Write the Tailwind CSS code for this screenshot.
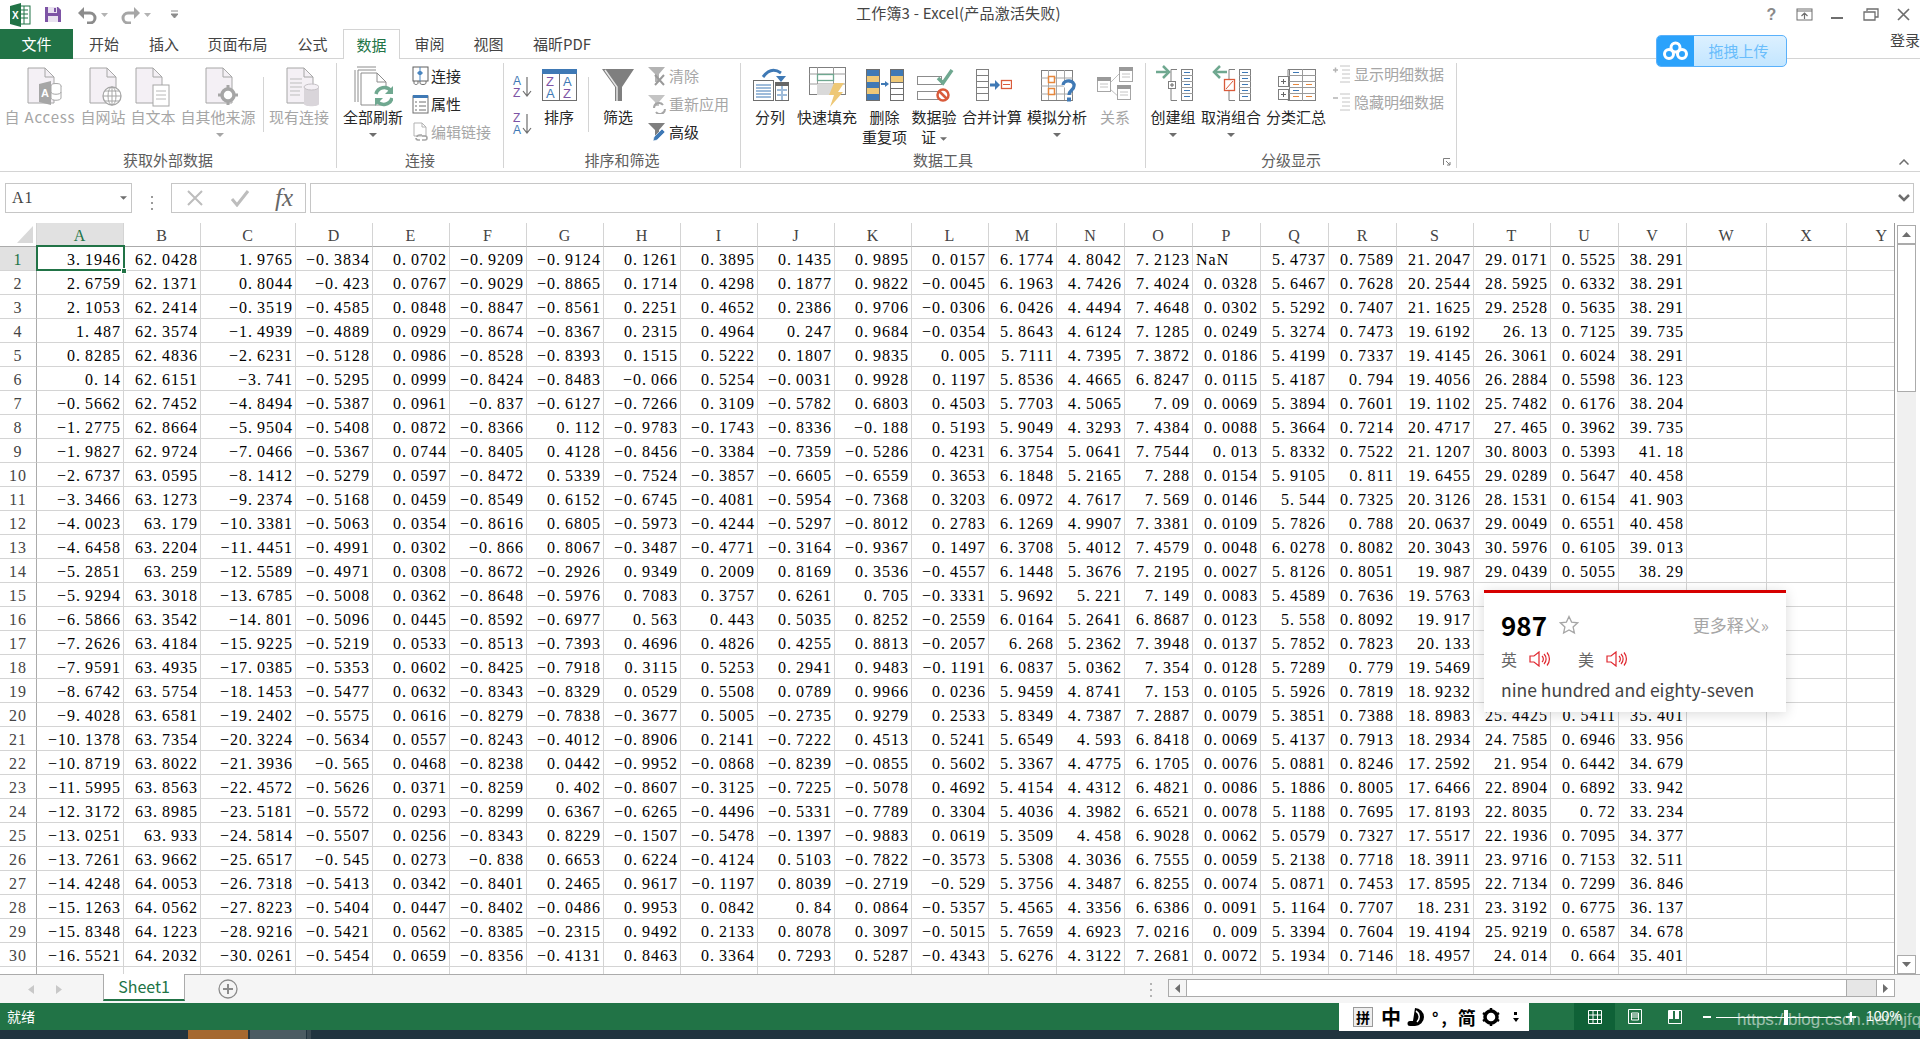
<!DOCTYPE html>
<html lang="zh-CN">
<head>
<meta charset="utf-8">
<script src="https://cdn.jsdelivr.net/npm/@tailwindcss/browser@4"></script>
<title>工作簿3 - Excel</title>
</head>
<body class="m-0">
<div class="relative w-[1920px] h-[1039px] overflow-hidden bg-white flex flex-col font-['Noto_Sans_CJK_SC',sans-serif] text-[15px] text-[#444]">

<!-- title bar -->
<div class="h-[29px] shrink-0 grid grid-cols-[856px_1fr_165px] items-center">
  <div class="flex items-center pl-[10px]">
    <svg class="w-[21px] h-[24px]" viewBox="0 0 21 24"><rect x="8" y="3" width="12" height="18" fill="#fff" stroke="#217346"/><path d="M11 7h7M11 11h7M11 15h7M14 3v18" stroke="#217346"/><path d="M0 3l11-3v24L0 21z" fill="#217346"/><text x="2" y="16" font-size="10" font-weight="700" fill="#fff" font-family="Liberation Sans">X</text></svg>
    <svg class="w-[18px] h-[17px] ml-[13px]" viewBox="0 0 18 17"><path d="M1 1h13l3 3v12H1z" fill="#7d54a5"/><rect x="4" y="1" width="9" height="6" fill="#e9e2f0"/><rect x="4" y="10" width="10" height="6" fill="#e9e2f0"/><rect x="10" y="2" width="2" height="4" fill="#7d54a5"/></svg>
    <svg class="w-[20px] h-[18px] ml-[15px]" viewBox="0 0 20 18"><path d="M4 7h9a5 5 0 0 1 0 10h-3" fill="none" stroke="#8c8c8c" stroke-width="3"/><path d="M7 1L1 7l6 6z" fill="#8c8c8c"/></svg>
    <svg class="w-[7px] h-[4px] ml-[4px]" viewBox="0 0 7 4"><path d="M0 0h7L3.500 4z" fill="#b3b3b3"/></svg>
    <svg class="w-[20px] h-[18px] ml-[13px]" viewBox="0 0 20 18"><path d="M16 7H7a5 5 0 0 0 0 10h3" fill="none" stroke="#a6a6a6" stroke-width="3"/><path d="M13 1l6 6-6 6z" fill="#a6a6a6"/></svg>
    <svg class="w-[7px] h-[4px] ml-[3px]" viewBox="0 0 7 4"><path d="M0 0h7L3.500 4z" fill="#b3b3b3"/></svg>
    <svg class="w-[7px] h-[9px] ml-[20px]" viewBox="0 0 7 9"><path d="M0 1h7M0 4h7L3.500 8z" stroke="#8c8c8c" fill="#8c8c8c" stroke-width="1"/></svg>
  </div>
  <div class="leading-[26px] h-[29px] text-[#444] tracking-[0.2px]">工作簿3 - Excel(产品激活失败)</div>
  <div class="flex items-center justify-end h-[29px]">
    <span class="w-[33px] text-center font-bold text-[#8a8a8a] font-['Liberation_Sans'] text-[16px]">?</span>
    <svg class="w-[33px] h-[13px]" viewBox="0 0 33 13"><rect x="9" y="1" width="15" height="11" fill="none" stroke="#6e6e6e"/><path d="M9 3h15M16.500 11V5M13.500 8l3-3 3 3" fill="none" stroke="#6e6e6e" stroke-width="1.200"/></svg>
    <svg class="w-[33px] h-[13px]" viewBox="0 0 33 13"><path d="M10 10h12" stroke="#6e6e6e" stroke-width="2"/></svg>
    <svg class="w-[33px] h-[13px]" viewBox="0 0 33 13"><path d="M13 3V1h11v8h-3M10 4h11v8H10z" fill="none" stroke="#6e6e6e" stroke-width="1.300"/></svg>
    <svg class="w-[33px] h-[13px]" viewBox="0 0 33 13"><path d="M11 1l11 11M22 1L11 12" stroke="#6e6e6e" stroke-width="1.700"/></svg>
  </div>
</div>

<!-- tabs -->
<div class="h-[30px] shrink-0 flex border-b border-[#d4d4d4] leading-[29px] text-center text-[#444]">
  <div class="w-[73px] h-[30px] bg-[#217346] text-white">文件</div>
  <div class="w-[62px]">开始</div>
  <div class="w-[58px]">插入</div>
  <div class="w-[89px]">页面布局</div>
  <div class="w-[61px]">公式</div>
  <div class="w-[57px] h-[30px] bg-white border-x border-t border-[#d4d4d4] text-[#217346]">数据</div>
  <div class="w-[59px]">审阅</div>
  <div class="w-[59px]">视图</div>
  <div class="w-[88px]">福昕PDF</div>
  <div class="ml-auto w-[30px] text-left text-[#444] whitespace-nowrap -translate-y-[4px]">登录</div>
</div>

<!-- ribbon -->
<div class="h-[113px] shrink-0 pt-[4px] flex border-b border-[#d4d4d4]">
  <!-- group 1 -->
  <div class="w-[337px] h-[105px] border-r border-[#d4d4d4] flex flex-col">
    <div class="h-[89px] flex pl-[5px] text-[#a6a6a6] leading-[20px] text-center">
      <div class="w-[70px] flex flex-col items-center">
        <svg class="w-[40px] h-[44px] translate-x-[4px]" viewBox="0 0 40 44"><path d="M4 5h17l9 9v26H4z" fill="#f4f0f5" stroke="#a6a6a6"/><path d="M21 5v9h9" fill="none" stroke="#a6a6a6"/><path d="M15 21l12-3v24l-12-3z" fill="#a6a6a6"/><text x="17" y="34" font-size="11" font-weight="700" fill="#fff" font-family="Liberation Sans">A</text><ellipse cx="32" cy="23" rx="5" ry="2.500" fill="#fff" stroke="#a6a6a6"/><path d="M27 23v12c0 3 10 3 10 0V23M27 29c0 3 10 3 10 0" fill="#fff" stroke="#a6a6a6"/></svg>
        <span class="whitespace-nowrap tracking-[0.8px]">自 Access</span>
      </div>
      <div class="w-[56px] flex flex-col items-center">
        <svg class="w-[40px] h-[44px]" viewBox="0 0 40 44"><path d="M7 5h17l9 9v26H7z" fill="#f4f0f5" stroke="#a6a6a6"/><path d="M24 5v9h9" fill="none" stroke="#a6a6a6"/><circle cx="29" cy="33" r="9" fill="#fff" stroke="#a6a6a6" stroke-width="1.300"/><path d="M20 33h18M29 24v18M22 28h14M22 38h14" stroke="#a6a6a6"/><ellipse cx="29" cy="33" rx="4" ry="9" fill="none" stroke="#a6a6a6"/></svg>
        <span class="whitespace-nowrap">自网站</span>
      </div>
      <div class="w-[44px] flex flex-col items-center">
        <svg class="w-[40px] h-[44px]" viewBox="0 0 40 44"><path d="M3 5h17l9 9v26H3z" fill="#f4f0f5" stroke="#a6a6a6"/><path d="M20 5v9h9" fill="none" stroke="#a6a6a6"/><rect x="20" y="22" width="16" height="21" fill="#fff" stroke="#a6a6a6"/><path d="M23 28h10M23 32h10M23 36h10" stroke="#b8b8b8"/></svg>
        <span class="whitespace-nowrap">自文本</span>
      </div>
      <div class="w-[86px] flex flex-col items-center">
        <svg class="w-[40px] h-[44px]" viewBox="0 0 40 44"><path d="M8 5h17l9 9v26H8z" fill="#f4f0f5" stroke="#a6a6a6"/><path d="M25 5v9h9" fill="none" stroke="#a6a6a6"/><circle cx="30" cy="32" r="6" fill="#fff" stroke="#a6a6a6" stroke-width="3.500"/><path d="M30 22v4M30 38v4M20 32h4M36 32h4" stroke="#a6a6a6" stroke-width="3"/></svg>
        <span class="whitespace-nowrap">自其他来源</span>
        <svg class="w-[8px] h-[4px] mt-[6px] translate-x-[2px]" viewBox="0 0 8 4"><path d="M0 0h8L4 4z" fill="#a6a6a6"/></svg>
      </div>
      <div class="w-px h-[55px] mt-[14px] ml-[2px] bg-[#d4d4d4]"></div>
      <div class="w-[68px] ml-[1px] flex flex-col items-center">
        <svg class="w-[40px] h-[44px]" viewBox="0 0 40 44"><path d="M8 5h17l9 9v26H8z" fill="#f4f0f5" stroke="#a6a6a6"/><path d="M25 5v9h9" fill="none" stroke="#a6a6a6"/><path d="M11 16h12M11 20h12M11 24h12M11 28h10M11 32h10" stroke="#bdbdbd"/><path d="M25 24v17c0 3 15 3 15 0V24z" fill="#d9d5da"/><ellipse cx="32.500" cy="24" rx="7.500" ry="3" fill="#f4f0f5" stroke="#c4c0c5"/></svg>
        <span class="whitespace-nowrap">现有连接</span>
      </div>
    </div>
    <div class="h-[16px] leading-[16px] text-center text-[#5e5e5e]">获取外部数据</div>
  </div>
  <!-- group 2 -->
  <div class="w-[167px] h-[105px] border-r border-[#d4d4d4] flex flex-col">
    <div class="h-[89px] flex pl-[2px] leading-[20px] text-center text-[#262626]">
      <div class="w-[68px] flex flex-col items-center">
        <svg class="w-[40px] h-[44px]" viewBox="0 0 40 44"><path d="M4 4h19M2 7v32M5 7h18M3 7" fill="none" stroke="#8c8c8c"/><path d="M5 7v32M8 10h16l9 9v23H8z" fill="#fff" stroke="#8c8c8c"/><path d="M24 10v9h9" fill="none" stroke="#8c8c8c"/><circle cx="31" cy="33" r="10" fill="#fff"/><path d="M23 31a8.500 8.500 0 0 1 15-3M39 35a8.500 8.500 0 0 1-15 3" fill="none" stroke="#6fa890" stroke-width="3.500"/><path d="M40 23v8h-8zM22 43v-8h8z" fill="#6fa890"/></svg>
        <span class="whitespace-nowrap">全部刷新</span>
        <svg class="w-[8px] h-[4px] mt-[6px]" viewBox="0 0 8 4"><path d="M0 0h8L4 4z" fill="#6e6e6e"/></svg>
      </div>
      <div class="ml-[5px] -mt-px flex flex-col text-left">
        <div class="h-[28px] flex items-center gap-[1px]"><svg class="w-[18px] h-[20px]" viewBox="0 0 18 20"><rect x="1" y="1" width="15" height="14" fill="#fff" stroke="#5f5f5f"/><path d="M8 4l3 3-3 3-3-3z" fill="#4a86c0"/><path d="M8 1v3M8 10v5" stroke="#4a86c0"/><path d="M2 15v2c0 2 4 2 4 0v-2M8 15v2c0 2 6 2 6 0v-2" fill="none" stroke="#6e6e6e"/></svg><span>连接</span></div>
        <div class="h-[28px] flex items-center gap-[1px]"><svg class="w-[18px] h-[20px]" viewBox="0 0 18 20"><rect x="1" y="2" width="15" height="17" fill="#fff" stroke="#6e6e6e"/><rect x="1" y="1" width="15" height="3" fill="#3f79b5"/><path d="M7 8h7M7 12h7M7 16h7M3 8h2M3 12h2M3 16h2" stroke="#6e6e6e"/></svg><span>属性</span></div>
        <div class="h-[28px] flex items-center gap-[1px] text-[#a6a6a6]"><svg class="w-[18px] h-[20px]" viewBox="0 0 18 20"><path d="M2 1h8l4 4v9H2z" fill="#fff" stroke="#b3b3b3"/><path d="M10 1v4h4" fill="none" stroke="#b3b3b3"/><path d="M5 15a3 2 0 0 1 3-2h2M8 18H6a3 2 0 0 1-2-2M10 14h3a2 2 0 0 1 0 4h-3" fill="none" stroke="#a6a6a6" stroke-width="1.600"/></svg><span class="whitespace-nowrap">编辑链接</span></div>
      </div>
    </div>
    <div class="h-[16px] leading-[16px] text-center text-[#5e5e5e]">连接</div>
  </div>
  <!-- group 3 -->
  <div class="w-[237px] h-[105px] border-r border-[#d4d4d4] flex flex-col">
    <div class="h-[89px] flex pl-[4px] leading-[20px] text-center text-[#262626]">
      <div class="w-[27px] flex flex-col items-center pt-[11px] gap-[13px]">
        <svg class="w-[20px] h-[24px]" viewBox="0 0 20 24"><text x="1" y="11" font-size="12" fill="#3f79b5" font-family="Liberation Sans">A</text><text x="1" y="23" font-size="12" fill="#7d54a5" font-family="Liberation Sans">Z</text><path d="M15 3v18M11 17l4 5 4-5" fill="none" stroke="#6e6e6e" stroke-width="1.200"/></svg>
        <svg class="w-[20px] h-[24px]" viewBox="0 0 20 24"><text x="1" y="11" font-size="12" fill="#7d54a5" font-family="Liberation Sans">Z</text><text x="1" y="23" font-size="12" fill="#3f79b5" font-family="Liberation Sans">A</text><path d="M15 3v18M11 17l4 5 4-5" fill="none" stroke="#6e6e6e" stroke-width="1.200"/></svg>
      </div>
      <div class="w-[48px] flex flex-col items-center">
        <svg class="w-[40px] h-[44px]" viewBox="0 0 40 44"><rect x="3.500" y="6.500" width="34" height="31" fill="#fff" stroke="#6e6e6e"/><rect x="3" y="6" width="35" height="5" fill="#3f79b5"/><path d="M20.500 11v26" stroke="#6e6e6e"/><text x="7" y="23" font-size="13" fill="#7d54a5" font-family="Liberation Sans">Z</text><text x="7" y="35" font-size="13" fill="#3f79b5" font-family="Liberation Sans">A</text><text x="24" y="23" font-size="13" fill="#3f79b5" font-family="Liberation Sans">A</text><text x="24" y="35" font-size="13" fill="#7d54a5" font-family="Liberation Sans">Z</text></svg>
        <span>排序</span>
      </div>
      <div class="w-px h-[55px] mt-[14px] ml-[5px] bg-[#d4d4d4]"></div>
      <div class="w-[52px] ml-[3px] flex flex-col items-center">
        <svg class="w-[40px] h-[44px]" viewBox="0 0 40 44"><path d="M4 6h32L24 24v14h-7V24z" fill="#7f7f7f"/><path d="M7 7l12 17v14" fill="none" stroke="#e6e6e6" stroke-width="1.500"/></svg>
        <span>筛选</span>
      </div>
      <div class="ml-[4px] -mt-px flex flex-col text-left">
        <div class="h-[28px] flex items-center gap-[3px] text-[#a6a6a6]"><svg class="w-[18px] h-[20px]" viewBox="0 0 18 20"><path d="M0 1h17l-6 7v8H7V8z" fill="#b3b3b3"/><path d="M7 9l9 10M16 9l-9 10" stroke="#9a9a9a" stroke-width="2"/></svg><span>清除</span></div>
        <div class="h-[28px] flex items-center gap-[3px] text-[#a6a6a6]"><svg class="w-[18px] h-[20px]" viewBox="0 0 18 20"><path d="M0 1h17l-6 7v4H7V8z" fill="#c4c4c4"/><path d="M6 14a5 5 0 0 1 9-3M17 15a5 5 0 0 1-9 3" fill="none" stroke="#a6a6a6" stroke-width="2"/></svg><span class="whitespace-nowrap">重新应用</span></div>
        <div class="h-[28px] flex items-center gap-[3px]"><svg class="w-[18px] h-[20px]" viewBox="0 0 18 20"><path d="M0 1h17l-6 7v6H7V8z" fill="#7f7f7f"/><path d="M5 19l1-4 8-8 3 3-8 8z" fill="#3f79b5" stroke="#fff" stroke-width=".6"/></svg><span>高级</span></div>
      </div>
    </div>
    <div class="h-[16px] leading-[16px] text-center text-[#5e5e5e] whitespace-nowrap">排序和筛选</div>
  </div>
  <!-- group 4 -->
  <div class="w-[405px] h-[105px] border-r border-[#d4d4d4] flex flex-col">
    <div class="h-[89px] flex pl-[4px] leading-[20px] text-center text-[#262626]">
      <div class="w-[50px] flex flex-col items-center">
        <svg class="w-[40px] h-[44px]" viewBox="0 0 40 44"><rect x="3.500" y="17.500" width="20" height="20" fill="#fff" stroke="#6e6e6e"/><path d="M6 22h15M6 25h15M6 28h15M6 31h15M6 34h15" stroke="#3f79b5"/><rect x="25.500" y="21.500" width="13" height="16" fill="#fff" stroke="#6e6e6e"/><rect x="25" y="19" width="14" height="4" fill="#666"/><path d="M27 27h4M33 27h4M27 32h4M33 32h4M32 23v14" stroke="#3f79b5"/><path d="M13 14Q21 3 31 10" fill="none" stroke="#3f79b5" stroke-width="3"/><path d="M26 13h10l-5 6z" fill="#3f79b5"/></svg>
        <span>分列</span>
      </div>
      <div class="w-[64px] flex flex-col items-center">
        <svg class="w-[40px] h-[44px]" viewBox="0 0 40 44"><rect x="2.500" y="4.500" width="36" height="27" fill="#fff" stroke="#7f7f7f"/><path d="M2 11h37M2 21h37M10.500 4v27M26.500 4v27" stroke="#9a9a9a"/><rect x="10" y="21" width="17" height="11" fill="#d9d9d9"/><rect x="10.500" y="11.500" width="16" height="6" fill="#fff" stroke="#6fa890" stroke-width="1.300"/><path d="M27 20h10l-6 9h5L23 44l4-12h-5z" fill="#eec876"/></svg>
        <span class="whitespace-nowrap">快速填充</span>
      </div>
      <div class="w-[51px] flex flex-col items-center">
        <svg class="w-[40px] h-[44px]" viewBox="0 0 40 44"><rect x="1.500" y="6.500" width="13" height="31" fill="#3f79b5" stroke="#6e6e6e"/><rect x="2" y="13" width="12" height="6" fill="#eec876"/><rect x="2" y="25" width="12" height="6" fill="#eec876"/><rect x="25.500" y="6.500" width="13" height="31" fill="#fff" stroke="#6e6e6e"/><rect x="26" y="7" width="12" height="6" fill="#3f79b5"/><rect x="26" y="13" width="12" height="6" fill="#eec876"/><path d="M26 19.500h12M26 25.500h12M26 31.500h12" stroke="#6e6e6e"/><path d="M16 21h5" stroke="#3f79b5" stroke-width="2"/><path d="M20 18l4 3-4 3z" fill="#3f79b5"/></svg>
        <div class="whitespace-nowrap">删除<br>重复项</div>
      </div>
      <div class="w-[48px] flex flex-col items-center">
        <svg class="w-[40px] h-[44px]" viewBox="0 0 40 44"><rect x="3.500" y="13.500" width="24" height="8" fill="#fff" stroke="#8c8c8c"/><rect x="3.500" y="28.500" width="24" height="8" fill="#fff" stroke="#8c8c8c"/><path d="M24 15l5 5 9-13" fill="none" stroke="#6fa890" stroke-width="3.500"/><circle cx="29" cy="32" r="5.500" fill="#fff" stroke="#d95b3b" stroke-width="2.500"/><path d="M25 28l8 8" stroke="#d95b3b" stroke-width="2.500"/></svg>
        <div class="whitespace-nowrap">数据验<br><span>证<svg class="inline w-[7px] h-[4px] ml-[4px] align-middle" viewBox="0 0 8 4"><path d="M0 0h8L4 4z" fill="#6e6e6e"/></svg></span></div>
      </div>
      <div class="w-[68px] flex flex-col items-center">
        <svg class="w-[40px] h-[44px]" viewBox="0 0 40 44"><rect x="4.500" y="6.500" width="12" height="31" fill="#fff" stroke="#7f7f7f"/><path d="M4 12.500h13M4 18.500h13M4 24.500h13M4 30.500h13" stroke="#7f7f7f"/><path d="M18 22h6" stroke="#3f79b5" stroke-width="3"/><path d="M23 17l5 5-5 5z" fill="#3f79b5"/><rect x="29.500" y="17.500" width="10" height="8" fill="#fff" stroke="#d95b3b" stroke-width="1.300"/><path d="M31 21.500h7" stroke="#d95b3b"/></svg>
        <span class="whitespace-nowrap">合并计算</span>
      </div>
      <div class="w-[62px] flex flex-col items-center">
        <svg class="w-[40px] h-[44px]" viewBox="0 0 40 44"><rect x="4.500" y="7.500" width="31" height="30" fill="#fff" stroke="#7f7f7f"/><path d="M4 15h32M4 23h32M4 31h32M11.500 7v30M19.500 7v30M27.500 7v30" stroke="#a6a6a6"/><rect x="11.500" y="13.500" width="6" height="6" fill="#fff" stroke="#e6873c" stroke-width="1.500"/><rect x="11.500" y="25.500" width="6" height="6" fill="#fff" stroke="#e6873c" stroke-width="1.500"/><path d="M26 22c1-6 12-5 11 1 0 4-5 4-5 9" fill="#fff" stroke="#3f79b5" stroke-width="3.300"/><rect x="30" y="34.500" width="4" height="4" fill="#3f79b5"/></svg>
        <span class="whitespace-nowrap">模拟分析</span>
        <svg class="w-[8px] h-[4px] mt-[6px]" viewBox="0 0 8 4"><path d="M0 0h8L4 4z" fill="#6e6e6e"/></svg>
      </div>
      <div class="w-[54px] flex flex-col items-center text-[#a6a6a6]">
        <svg class="w-[40px] h-[44px]" viewBox="0 0 40 44"><path d="M15 20l10-10M15 26l10 9" stroke="#bfbfbf"/><rect x="2.500" y="14.500" width="13" height="14" fill="#fff" stroke="#a6a6a6"/><rect x="2" y="14" width="14" height="4" fill="#9a9a9a"/><rect x="24.500" y="4.500" width="13" height="14" fill="#fff" stroke="#a6a6a6"/><rect x="24" y="4" width="14" height="4" fill="#9a9a9a"/><rect x="22.500" y="22.500" width="13" height="14" fill="#fff" stroke="#a6a6a6"/><rect x="22" y="22" width="14" height="4" fill="#9a9a9a"/><path d="M5 21h8M5 24h8M27 11h8M27 14h8M25 29h8M25 32h8" stroke="#c4c4c4"/></svg>
        <span>关系</span>
      </div>
    </div>
    <div class="h-[16px] leading-[16px] text-center text-[#5e5e5e]">数据工具</div>
  </div>
  <!-- group 5 -->
  <div class="relative w-[311px] h-[105px] border-r border-[#d4d4d4] flex flex-col">
    <div class="h-[89px] flex pl-[2px] leading-[20px] text-center text-[#262626]">
      <div class="w-[50px] flex flex-col items-center">
        <svg class="w-[40px] h-[44px]" viewBox="0 0 40 44"><path d="M3 9h11" stroke="#6fa890" stroke-width="2.500"/><path d="M10 3l6 6-6 6" fill="none" stroke="#6fa890" stroke-width="2.500"/><path d="M24 6.500h-6v12M18 25v12.500h6" fill="none" stroke="#7f7f7f"/><rect x="15.500" y="18.500" width="7" height="7" fill="#fff" stroke="#7f7f7f"/><path d="M17 22h4M19 20v4" stroke="#666"/><rect x="28.500" y="6.500" width="11" height="31" fill="#fff" stroke="#7f7f7f"/><path d="M28 12.500h12M28 18.500h12M28 24.500h12M28 30.500h12" stroke="#9a9a9a"/><path d="M31 9.500h6M31 15.500h6M31 21.500h6M31 27.500h6M31 33.500h6" stroke="#3f79b5"/></svg>
        <span>创建组</span>
        <svg class="w-[8px] h-[4px] mt-[6px]" viewBox="0 0 8 4"><path d="M0 0h8L4 4z" fill="#6e6e6e"/></svg>
      </div>
      <div class="w-[66px] flex flex-col items-center">
        <svg class="w-[40px] h-[44px]" viewBox="0 0 40 44"><path d="M5 9h11" stroke="#6fa890" stroke-width="2.500"/><path d="M9 3L3 9l6 6" fill="none" stroke="#6fa890" stroke-width="2.500"/><path d="M24 6.500h-6v10M18 28v9.500h6" fill="none" stroke="#7f7f7f"/><rect x="13.500" y="16.500" width="10" height="11" fill="#fff" stroke="#d95b3b" stroke-width="1.300"/><path d="M15 26l7-8" stroke="#d95b3b"/><rect x="28.500" y="6.500" width="11" height="31" fill="#fff" stroke="#7f7f7f"/><path d="M28 12.500h12M28 18.500h12M28 24.500h12M28 30.500h12" stroke="#9a9a9a"/><path d="M31 9.500h6M31 15.500h6M31 21.500h6M31 27.500h6M31 33.500h6" stroke="#3f79b5"/></svg>
        <span class="whitespace-nowrap">取消组合</span>
        <svg class="w-[8px] h-[4px] mt-[6px]" viewBox="0 0 8 4"><path d="M0 0h8L4 4z" fill="#6e6e6e"/></svg>
      </div>
      <div class="w-[64px] flex flex-col items-center">
        <svg class="w-[40px] h-[44px]" viewBox="0 0 40 44"><path d="M12 13V6.500h6M12 24v-2M12 35v2.500h6" fill="none" stroke="#7f7f7f"/><rect x="13.500" y="6.500" width="26" height="31" fill="none" stroke="#7f7f7f"/><path d="M13 12.500h27M13 18.500h27M13 24.500h27M13 30.500h27M26.500 6v32" stroke="#9a9a9a"/><rect x="2.500" y="13.500" width="10" height="10" fill="#fff" stroke="#7f7f7f"/><rect x="2.500" y="26.500" width="10" height="10" fill="#fff" stroke="#7f7f7f"/><path d="M5 18.500h5M7.500 16v5M5 31.500h5M7.500 29v5" stroke="#666"/><path d="M17 9.500h6M17 27.500h6" stroke="#3f79b5"/><path d="M17 21.500h6M30 21.500h6M17 33.500h6M30 33.500h6" stroke="#e6873c"/></svg>
        <span class="whitespace-nowrap">分类汇总</span>
      </div>
      <div class="ml-[5px] -mt-[3px] flex flex-col text-left text-[#a6a6a6]">
        <div class="h-[28px] flex items-center gap-[3px]"><svg class="w-[18px] h-[18px]" viewBox="0 0 18 18"><path d="M0 5h5M2.500 2.500v5" stroke="#b3b3b3" stroke-width="1.500"/><path d="M7 1h10M9 5h8M9 9h8M9 13h8M7 17h10" stroke="#c4c4c4"/></svg><span class="whitespace-nowrap">显示明细数据</span></div>
        <div class="h-[28px] flex items-center gap-[3px]"><svg class="w-[18px] h-[18px]" viewBox="0 0 18 18"><path d="M0 5h5" stroke="#b3b3b3" stroke-width="1.500"/><path d="M7 1h10M9 5h8M9 9h8M9 13h8M7 17h10" stroke="#c4c4c4"/></svg><span class="whitespace-nowrap">隐藏明细数据</span></div>
      </div>
    </div>
    <div class="h-[16px] leading-[16px] text-center text-[#5e5e5e] pr-[20px]">分级显示</div>
    <svg class="absolute right-[5px] bottom-[2px] w-[8px] h-[8px]" viewBox="0 0 8 8"><path d="M0.500 7V0.500H7M3 3l4 4M4 7h3V4" fill="none" stroke="#7f7f7f"/></svg>
  </div>
  <div class="flex-1 flex justify-end items-end pr-[11px] pb-[6px]"><svg class="w-[10px] h-[6px]" viewBox="0 0 10 6"><path d="M0.500 5.500L5 1l4.500 4.500" fill="none" stroke="#6e6e6e" stroke-width="1.500"/></svg></div>
</div>

<!-- formula bar -->
<div class="h-[51px] shrink-0 pt-[11px] pl-[5px] pr-[6px] flex font-['Liberation_Serif',serif] text-[16px] tracking-[1px]">
  <div class="w-[127px] h-[30px] border border-[#c6c6c6] flex items-center justify-between pl-[6px] pr-[4px] text-[#444]">A1<svg class="w-[7px] h-[4px]" viewBox="0 0 8 4"><path d="M0 0h8L4 4z" fill="#6e6e6e"/></svg></div>
  <div class="w-[39px] flex items-center justify-center"><svg class="w-[2px] h-[14px]" viewBox="0 0 2 14"><path d="M1 0v2M1 6v2M1 12v2" stroke="#9a9a9a" stroke-width="2"/></svg></div>
  <div class="w-[135px] h-[30px] border border-[#c6c6c6] flex items-center pl-[14px]">
    <svg class="w-[18px] h-[18px]" viewBox="0 0 18 18"><path d="M2 2l14 14M16 2L2 16" stroke="#bdbdbd" stroke-width="2"/></svg>
    <svg class="w-[20px] h-[18px] ml-[26px]" viewBox="0 0 20 18"><path d="M2 10l5 6L18 2" fill="none" stroke="#bdbdbd" stroke-width="3"/></svg>
    <span class="ml-[25px] italic text-[25px] leading-[24px] text-[#666] tracking-[0px]">fx</span>
  </div>
  <div class="ml-[4px] flex-1 h-[30px] border border-[#c6c6c6] flex items-center justify-end pr-[3px]"><svg class="w-[12px] h-[8px]" viewBox="0 0 12 8"><path d="M1 1l5 5 5-5" fill="none" stroke="#6e6e6e" stroke-width="2.500"/></svg></div>
</div>

<!-- grid + scrollbar -->
<div class="h-[751px] shrink-0 flex">
  <div class="relative w-[1895px] h-[751px] overflow-hidden border-r border-[#9b9b9b]">
<table class="table-fixed border-separate border-spacing-0 w-[1895px] font-['Liberation_Serif',serif] text-[16px] tracking-[1px] leading-[21px] text-black [&_i]:inline-block [&_i]:w-[9px] [&_i]:not-italic [&_i]:text-left [&_td]:h-[24px] [&_td]:p-0 [&_td]:pr-[2px] [&_td]:pt-[2px] [&_td]:text-right [&_td]:whitespace-nowrap [&_td]:overflow-hidden [&_td]:border-r [&_td]:border-b [&_td]:border-[#d4d4d4] [&_tbody_th]:h-[24px] [&_tbody_th]:p-0 [&_tbody_th]:pt-[2px] [&_tbody_th]:font-normal [&_tbody_th]:text-[#444] [&_tbody_th]:text-center [&_tbody_th]:border-r [&_tbody_th]:border-b [&_tbody_th]:border-r-[#ababab] [&_tbody_th]:border-b-[#d4d4d4] [&_thead_th]:h-[24px] [&_thead_th]:p-0 [&_thead_th]:pt-[2px] [&_thead_th]:font-normal [&_thead_th]:text-[#444] [&_thead_th]:border-r [&_thead_th]:border-r-[#d4d4d4] [&_thead_th]:border-b [&_thead_th]:border-b-[#ababab]">
<colgroup><col class="w-[37px]"><col class="w-[87px]"><col class="w-[77px]"><col class="w-[95px]"><col class="w-[77px]"><col class="w-[77px]"><col class="w-[77px]"><col class="w-[77px]"><col class="w-[77px]"><col class="w-[77px]"><col class="w-[77px]"><col class="w-[77px]"><col class="w-[77px]"><col class="w-[68px]"><col class="w-[68px]"><col class="w-[68px]"><col class="w-[68px]"><col class="w-[68px]"><col class="w-[68px]"><col class="w-[77px]"><col class="w-[77px]"><col class="w-[68px]"><col class="w-[68px]"><col class="w-[80px]"><col class="w-[80px]"><col class="w-[48px]"></colgroup>
<thead><tr><th class="relative"><svg class="absolute right-[3px] bottom-[3px] w-[16px] h-[17px]" viewBox="0 0 16 17"><path d="M16 0v17H0z" fill="#d9d9d9"/></svg></th><th class="bg-[#e1e1e1] !text-[#217346]">A</th><th>B</th><th>C</th><th>D</th><th>E</th><th>F</th><th>G</th><th>H</th><th>I</th><th>J</th><th>K</th><th>L</th><th>M</th><th>N</th><th>O</th><th>P</th><th>Q</th><th>R</th><th>S</th><th>T</th><th>U</th><th>V</th><th>W</th><th>X</th><th class="!text-right !pr-[6px]">Y</th></tr></thead>
<tbody>
<tr><th class="!bg-[#e1e1e1] !text-[#217346]">1<td>3<i>.</i>1946<td>62<i>.</i>0428<td>1<i>.</i>9765<td>−0<i>.</i>3834<td>0<i>.</i>0702<td>−0<i>.</i>9209<td>−0<i>.</i>9124<td>0<i>.</i>1261<td>0<i>.</i>3895<td>0<i>.</i>1435<td>0<i>.</i>9895<td>0<i>.</i>0157<td>6<i>.</i>1774<td>4<i>.</i>8042<td>7<i>.</i>2123<td class="!text-left !pl-[3px]">NaN<td>5<i>.</i>4737<td>0<i>.</i>7589<td>21<i>.</i>2047<td>29<i>.</i>0171<td>0<i>.</i>5525<td>38<i>.</i>291<td><td><td>
<tr><th>2<td>2<i>.</i>6759<td>62<i>.</i>1371<td>0<i>.</i>8044<td>−0<i>.</i>423<td>0<i>.</i>0767<td>−0<i>.</i>9029<td>−0<i>.</i>8865<td>0<i>.</i>1714<td>0<i>.</i>4298<td>0<i>.</i>1877<td>0<i>.</i>9822<td>−0<i>.</i>0045<td>6<i>.</i>1963<td>4<i>.</i>7426<td>7<i>.</i>4024<td>0<i>.</i>0328<td>5<i>.</i>6467<td>0<i>.</i>7628<td>20<i>.</i>2544<td>28<i>.</i>5925<td>0<i>.</i>6332<td>38<i>.</i>291<td><td><td>
<tr><th>3<td>2<i>.</i>1053<td>62<i>.</i>2414<td>−0<i>.</i>3519<td>−0<i>.</i>4585<td>0<i>.</i>0848<td>−0<i>.</i>8847<td>−0<i>.</i>8561<td>0<i>.</i>2251<td>0<i>.</i>4652<td>0<i>.</i>2386<td>0<i>.</i>9706<td>−0<i>.</i>0306<td>6<i>.</i>0426<td>4<i>.</i>4494<td>7<i>.</i>4648<td>0<i>.</i>0302<td>5<i>.</i>5292<td>0<i>.</i>7407<td>21<i>.</i>1625<td>29<i>.</i>2528<td>0<i>.</i>5635<td>38<i>.</i>291<td><td><td>
<tr><th>4<td>1<i>.</i>487<td>62<i>.</i>3574<td>−1<i>.</i>4939<td>−0<i>.</i>4889<td>0<i>.</i>0929<td>−0<i>.</i>8674<td>−0<i>.</i>8367<td>0<i>.</i>2315<td>0<i>.</i>4964<td>0<i>.</i>247<td>0<i>.</i>9684<td>−0<i>.</i>0354<td>5<i>.</i>8643<td>4<i>.</i>6124<td>7<i>.</i>1285<td>0<i>.</i>0249<td>5<i>.</i>3274<td>0<i>.</i>7473<td>19<i>.</i>6192<td>26<i>.</i>13<td>0<i>.</i>7125<td>39<i>.</i>735<td><td><td>
<tr><th>5<td>0<i>.</i>8285<td>62<i>.</i>4836<td>−2<i>.</i>6231<td>−0<i>.</i>5128<td>0<i>.</i>0986<td>−0<i>.</i>8528<td>−0<i>.</i>8393<td>0<i>.</i>1515<td>0<i>.</i>5222<td>0<i>.</i>1807<td>0<i>.</i>9835<td>0<i>.</i>005<td>5<i>.</i>7111<td>4<i>.</i>7395<td>7<i>.</i>3872<td>0<i>.</i>0186<td>5<i>.</i>4199<td>0<i>.</i>7337<td>19<i>.</i>4145<td>26<i>.</i>3061<td>0<i>.</i>6024<td>38<i>.</i>291<td><td><td>
<tr><th>6<td>0<i>.</i>14<td>62<i>.</i>6151<td>−3<i>.</i>741<td>−0<i>.</i>5295<td>0<i>.</i>0999<td>−0<i>.</i>8424<td>−0<i>.</i>8483<td>−0<i>.</i>066<td>0<i>.</i>5254<td>−0<i>.</i>0031<td>0<i>.</i>9928<td>0<i>.</i>1197<td>5<i>.</i>8536<td>4<i>.</i>4665<td>6<i>.</i>8247<td>0<i>.</i>0115<td>5<i>.</i>4187<td>0<i>.</i>794<td>19<i>.</i>4056<td>26<i>.</i>2884<td>0<i>.</i>5598<td>36<i>.</i>123<td><td><td>
<tr><th>7<td>−0<i>.</i>5662<td>62<i>.</i>7452<td>−4<i>.</i>8494<td>−0<i>.</i>5387<td>0<i>.</i>0961<td>−0<i>.</i>837<td>−0<i>.</i>6127<td>−0<i>.</i>7266<td>0<i>.</i>3109<td>−0<i>.</i>5782<td>0<i>.</i>6803<td>0<i>.</i>4503<td>5<i>.</i>7703<td>4<i>.</i>5065<td>7<i>.</i>09<td>0<i>.</i>0069<td>5<i>.</i>3894<td>0<i>.</i>7601<td>19<i>.</i>1102<td>25<i>.</i>7482<td>0<i>.</i>6176<td>38<i>.</i>204<td><td><td>
<tr><th>8<td>−1<i>.</i>2775<td>62<i>.</i>8664<td>−5<i>.</i>9504<td>−0<i>.</i>5408<td>0<i>.</i>0872<td>−0<i>.</i>8366<td>0<i>.</i>112<td>−0<i>.</i>9783<td>−0<i>.</i>1743<td>−0<i>.</i>8336<td>−0<i>.</i>188<td>0<i>.</i>5193<td>5<i>.</i>9049<td>4<i>.</i>3293<td>7<i>.</i>4384<td>0<i>.</i>0088<td>5<i>.</i>3664<td>0<i>.</i>7214<td>20<i>.</i>4717<td>27<i>.</i>465<td>0<i>.</i>3962<td>39<i>.</i>735<td><td><td>
<tr><th>9<td>−1<i>.</i>9827<td>62<i>.</i>9724<td>−7<i>.</i>0466<td>−0<i>.</i>5367<td>0<i>.</i>0744<td>−0<i>.</i>8405<td>0<i>.</i>4128<td>−0<i>.</i>8456<td>−0<i>.</i>3384<td>−0<i>.</i>7359<td>−0<i>.</i>5286<td>0<i>.</i>4231<td>6<i>.</i>3754<td>5<i>.</i>0641<td>7<i>.</i>7544<td>0<i>.</i>013<td>5<i>.</i>8332<td>0<i>.</i>7522<td>21<i>.</i>1207<td>30<i>.</i>8003<td>0<i>.</i>5393<td>41<i>.</i>18<td><td><td>
<tr><th>10<td>−2<i>.</i>6737<td>63<i>.</i>0595<td>−8<i>.</i>1412<td>−0<i>.</i>5279<td>0<i>.</i>0597<td>−0<i>.</i>8472<td>0<i>.</i>5339<td>−0<i>.</i>7524<td>−0<i>.</i>3857<td>−0<i>.</i>6605<td>−0<i>.</i>6559<td>0<i>.</i>3653<td>6<i>.</i>1848<td>5<i>.</i>2165<td>7<i>.</i>288<td>0<i>.</i>0154<td>5<i>.</i>9105<td>0<i>.</i>811<td>19<i>.</i>6455<td>29<i>.</i>0289<td>0<i>.</i>5647<td>40<i>.</i>458<td><td><td>
<tr><th>11<td>−3<i>.</i>3466<td>63<i>.</i>1273<td>−9<i>.</i>2374<td>−0<i>.</i>5168<td>0<i>.</i>0459<td>−0<i>.</i>8549<td>0<i>.</i>6152<td>−0<i>.</i>6745<td>−0<i>.</i>4081<td>−0<i>.</i>5954<td>−0<i>.</i>7368<td>0<i>.</i>3203<td>6<i>.</i>0972<td>4<i>.</i>7617<td>7<i>.</i>569<td>0<i>.</i>0146<td>5<i>.</i>544<td>0<i>.</i>7325<td>20<i>.</i>3126<td>28<i>.</i>1531<td>0<i>.</i>6154<td>41<i>.</i>903<td><td><td>
<tr><th>12<td>−4<i>.</i>0023<td>63<i>.</i>179<td>−10<i>.</i>3381<td>−0<i>.</i>5063<td>0<i>.</i>0354<td>−0<i>.</i>8616<td>0<i>.</i>6805<td>−0<i>.</i>5973<td>−0<i>.</i>4244<td>−0<i>.</i>5297<td>−0<i>.</i>8012<td>0<i>.</i>2783<td>6<i>.</i>1269<td>4<i>.</i>9907<td>7<i>.</i>3381<td>0<i>.</i>0109<td>5<i>.</i>7826<td>0<i>.</i>788<td>20<i>.</i>0637<td>29<i>.</i>0049<td>0<i>.</i>6551<td>40<i>.</i>458<td><td><td>
<tr><th>13<td>−4<i>.</i>6458<td>63<i>.</i>2204<td>−11<i>.</i>4451<td>−0<i>.</i>4991<td>0<i>.</i>0302<td>−0<i>.</i>866<td>0<i>.</i>8067<td>−0<i>.</i>3487<td>−0<i>.</i>4771<td>−0<i>.</i>3164<td>−0<i>.</i>9367<td>0<i>.</i>1497<td>6<i>.</i>3708<td>5<i>.</i>4012<td>7<i>.</i>4579<td>0<i>.</i>0048<td>6<i>.</i>0278<td>0<i>.</i>8082<td>20<i>.</i>3043<td>30<i>.</i>5976<td>0<i>.</i>6105<td>39<i>.</i>013<td><td><td>
<tr><th>14<td>−5<i>.</i>2851<td>63<i>.</i>259<td>−12<i>.</i>5589<td>−0<i>.</i>4971<td>0<i>.</i>0308<td>−0<i>.</i>8672<td>−0<i>.</i>2926<td>0<i>.</i>9349<td>0<i>.</i>2009<td>0<i>.</i>8169<td>0<i>.</i>3536<td>−0<i>.</i>4557<td>6<i>.</i>1448<td>5<i>.</i>3676<td>7<i>.</i>2195<td>0<i>.</i>0027<td>5<i>.</i>8126<td>0<i>.</i>8051<td>19<i>.</i>987<td>29<i>.</i>0439<td>0<i>.</i>5055<td>38<i>.</i>29<td><td><td>
<tr><th>15<td>−5<i>.</i>9294<td>63<i>.</i>3018<td>−13<i>.</i>6785<td>−0<i>.</i>5008<td>0<i>.</i>0362<td>−0<i>.</i>8648<td>−0<i>.</i>5976<td>0<i>.</i>7083<td>0<i>.</i>3757<td>0<i>.</i>6261<td>0<i>.</i>705<td>−0<i>.</i>3331<td>5<i>.</i>9692<td>5<i>.</i>221<td>7<i>.</i>149<td>0<i>.</i>0083<td>5<i>.</i>4589<td>0<i>.</i>7636<td>19<i>.</i>5763<td><td><td><td><td><td>
<tr><th>16<td>−6<i>.</i>5866<td>63<i>.</i>3542<td>−14<i>.</i>801<td>−0<i>.</i>5096<td>0<i>.</i>0445<td>−0<i>.</i>8592<td>−0<i>.</i>6977<td>0<i>.</i>563<td>0<i>.</i>443<td>0<i>.</i>5035<td>0<i>.</i>8252<td>−0<i>.</i>2559<td>6<i>.</i>0164<td>5<i>.</i>2641<td>6<i>.</i>8687<td>0<i>.</i>0123<td>5<i>.</i>558<td>0<i>.</i>8092<td>19<i>.</i>917<td><td><td><td><td><td>
<tr><th>17<td>−7<i>.</i>2626<td>63<i>.</i>4184<td>−15<i>.</i>9225<td>−0<i>.</i>5219<td>0<i>.</i>0533<td>−0<i>.</i>8513<td>−0<i>.</i>7393<td>0<i>.</i>4696<td>0<i>.</i>4826<td>0<i>.</i>4255<td>0<i>.</i>8813<td>−0<i>.</i>2057<td>6<i>.</i>268<td>5<i>.</i>2362<td>7<i>.</i>3948<td>0<i>.</i>0137<td>5<i>.</i>7852<td>0<i>.</i>7823<td>20<i>.</i>133<td><td><td><td><td><td>
<tr><th>18<td>−7<i>.</i>9591<td>63<i>.</i>4935<td>−17<i>.</i>0385<td>−0<i>.</i>5353<td>0<i>.</i>0602<td>−0<i>.</i>8425<td>−0<i>.</i>7918<td>0<i>.</i>3115<td>0<i>.</i>5253<td>0<i>.</i>2941<td>0<i>.</i>9483<td>−0<i>.</i>1191<td>6<i>.</i>0837<td>5<i>.</i>0362<td>7<i>.</i>354<td>0<i>.</i>0128<td>5<i>.</i>7289<td>0<i>.</i>779<td>19<i>.</i>5469<td><td><td><td><td><td>
<tr><th>19<td>−8<i>.</i>6742<td>63<i>.</i>5754<td>−18<i>.</i>1453<td>−0<i>.</i>5477<td>0<i>.</i>0632<td>−0<i>.</i>8343<td>−0<i>.</i>8329<td>0<i>.</i>0529<td>0<i>.</i>5508<td>0<i>.</i>0789<td>0<i>.</i>9966<td>0<i>.</i>0236<td>5<i>.</i>9459<td>4<i>.</i>8741<td>7<i>.</i>153<td>0<i>.</i>0105<td>5<i>.</i>5926<td>0<i>.</i>7819<td>18<i>.</i>9232<td><td><td><td><td><td>
<tr><th>20<td>−9<i>.</i>4028<td>63<i>.</i>6581<td>−19<i>.</i>2402<td>−0<i>.</i>5575<td>0<i>.</i>0616<td>−0<i>.</i>8279<td>−0<i>.</i>7838<td>−0<i>.</i>3677<td>0<i>.</i>5005<td>−0<i>.</i>2735<td>0<i>.</i>9279<td>0<i>.</i>2533<td>5<i>.</i>8349<td>4<i>.</i>7387<td>7<i>.</i>2887<td>0<i>.</i>0079<td>5<i>.</i>3851<td>0<i>.</i>7388<td>18<i>.</i>8983<td>25<i>.</i>4425<td>0<i>.</i>5411<td>35<i>.</i>401<td><td><td>
<tr><th>21<td>−10<i>.</i>1378<td>63<i>.</i>7354<td>−20<i>.</i>3224<td>−0<i>.</i>5634<td>0<i>.</i>0557<td>−0<i>.</i>8243<td>−0<i>.</i>4012<td>−0<i>.</i>8906<td>0<i>.</i>2141<td>−0<i>.</i>7222<td>0<i>.</i>4513<td>0<i>.</i>5241<td>5<i>.</i>6549<td>4<i>.</i>593<td>6<i>.</i>8418<td>0<i>.</i>0069<td>5<i>.</i>4137<td>0<i>.</i>7913<td>18<i>.</i>2934<td>24<i>.</i>7585<td>0<i>.</i>6946<td>33<i>.</i>956<td><td><td>
<tr><th>22<td>−10<i>.</i>8719<td>63<i>.</i>8022<td>−21<i>.</i>3936<td>−0<i>.</i>565<td>0<i>.</i>0468<td>−0<i>.</i>8238<td>0<i>.</i>0442<td>−0<i>.</i>9952<td>−0<i>.</i>0868<td>−0<i>.</i>8239<td>−0<i>.</i>0855<td>0<i>.</i>5602<td>5<i>.</i>3367<td>4<i>.</i>4775<td>6<i>.</i>1705<td>0<i>.</i>0076<td>5<i>.</i>0881<td>0<i>.</i>8246<td>17<i>.</i>2592<td>21<i>.</i>954<td>0<i>.</i>6442<td>34<i>.</i>679<td><td><td>
<tr><th>23<td>−11<i>.</i>5995<td>63<i>.</i>8563<td>−22<i>.</i>4572<td>−0<i>.</i>5626<td>0<i>.</i>0371<td>−0<i>.</i>8259<td>0<i>.</i>402<td>−0<i>.</i>8607<td>−0<i>.</i>3125<td>−0<i>.</i>7225<td>−0<i>.</i>5078<td>0<i>.</i>4692<td>5<i>.</i>4154<td>4<i>.</i>4312<td>6<i>.</i>4821<td>0<i>.</i>0086<td>5<i>.</i>1886<td>0<i>.</i>8005<td>17<i>.</i>6466<td>22<i>.</i>8904<td>0<i>.</i>6892<td>33<i>.</i>942<td><td><td>
<tr><th>24<td>−12<i>.</i>3172<td>63<i>.</i>8985<td>−23<i>.</i>5181<td>−0<i>.</i>5572<td>0<i>.</i>0293<td>−0<i>.</i>8299<td>0<i>.</i>6367<td>−0<i>.</i>6265<td>−0<i>.</i>4496<td>−0<i>.</i>5331<td>−0<i>.</i>7789<td>0<i>.</i>3304<td>5<i>.</i>4036<td>4<i>.</i>3982<td>6<i>.</i>6521<td>0<i>.</i>0078<td>5<i>.</i>1188<td>0<i>.</i>7695<td>17<i>.</i>8193<td>22<i>.</i>8035<td>0<i>.</i>72<td>33<i>.</i>234<td><td><td>
<tr><th>25<td>−13<i>.</i>0251<td>63<i>.</i>933<td>−24<i>.</i>5814<td>−0<i>.</i>5507<td>0<i>.</i>0256<td>−0<i>.</i>8343<td>0<i>.</i>8229<td>−0<i>.</i>1507<td>−0<i>.</i>5478<td>−0<i>.</i>1397<td>−0<i>.</i>9883<td>0<i>.</i>0619<td>5<i>.</i>3509<td>4<i>.</i>458<td>6<i>.</i>9028<td>0<i>.</i>0062<td>5<i>.</i>0579<td>0<i>.</i>7327<td>17<i>.</i>5517<td>22<i>.</i>1936<td>0<i>.</i>7095<td>34<i>.</i>377<td><td><td>
<tr><th>26<td>−13<i>.</i>7261<td>63<i>.</i>9662<td>−25<i>.</i>6517<td>−0<i>.</i>545<td>0<i>.</i>0273<td>−0<i>.</i>838<td>0<i>.</i>6653<td>0<i>.</i>6224<td>−0<i>.</i>4124<td>0<i>.</i>5103<td>−0<i>.</i>7822<td>−0<i>.</i>3573<td>5<i>.</i>5308<td>4<i>.</i>3036<td>6<i>.</i>7555<td>0<i>.</i>0059<td>5<i>.</i>2138<td>0<i>.</i>7718<td>18<i>.</i>3911<td>23<i>.</i>9716<td>0<i>.</i>7153<td>32<i>.</i>511<td><td><td>
<tr><th>27<td>−14<i>.</i>4248<td>64<i>.</i>0053<td>−26<i>.</i>7318<td>−0<i>.</i>5413<td>0<i>.</i>0342<td>−0<i>.</i>8401<td>0<i>.</i>2465<td>0<i>.</i>9617<td>−0<i>.</i>1197<td>0<i>.</i>8039<td>−0<i>.</i>2719<td>−0<i>.</i>529<td>5<i>.</i>3756<td>4<i>.</i>3487<td>6<i>.</i>8255<td>0<i>.</i>0074<td>5<i>.</i>0871<td>0<i>.</i>7453<td>17<i>.</i>8595<td>22<i>.</i>7134<td>0<i>.</i>7299<td>36<i>.</i>846<td><td><td>
<tr><th>28<td>−15<i>.</i>1263<td>64<i>.</i>0562<td>−27<i>.</i>8223<td>−0<i>.</i>5404<td>0<i>.</i>0447<td>−0<i>.</i>8402<td>−0<i>.</i>0486<td>0<i>.</i>9953<td>0<i>.</i>0842<td>0<i>.</i>84<td>0<i>.</i>0864<td>−0<i>.</i>5357<td>5<i>.</i>4565<td>4<i>.</i>3356<td>6<i>.</i>6386<td>0<i>.</i>0091<td>5<i>.</i>1164<td>0<i>.</i>7707<td>18<i>.</i>231<td>23<i>.</i>3192<td>0<i>.</i>6775<td>36<i>.</i>137<td><td><td>
<tr><th>29<td>−15<i>.</i>8348<td>64<i>.</i>1223<td>−28<i>.</i>9216<td>−0<i>.</i>5421<td>0<i>.</i>0562<td>−0<i>.</i>8385<td>−0<i>.</i>2315<td>0<i>.</i>9492<td>0<i>.</i>2133<td>0<i>.</i>8078<td>0<i>.</i>3097<td>−0<i>.</i>5015<td>5<i>.</i>7659<td>4<i>.</i>6923<td>7<i>.</i>0216<td>0<i>.</i>009<td>5<i>.</i>3394<td>0<i>.</i>7604<td>19<i>.</i>4194<td>25<i>.</i>9219<td>0<i>.</i>6587<td>34<i>.</i>678<td><td><td>
<tr><th>30<td>−16<i>.</i>5521<td>64<i>.</i>2032<td>−30<i>.</i>0261<td>−0<i>.</i>5454<td>0<i>.</i>0659<td>−0<i>.</i>8356<td>−0<i>.</i>4131<td>0<i>.</i>8463<td>0<i>.</i>3364<td>0<i>.</i>7293<td>0<i>.</i>5287<td>−0<i>.</i>4343<td>5<i>.</i>6276<td>4<i>.</i>3122<td>7<i>.</i>2681<td>0<i>.</i>0072<td>5<i>.</i>1934<td>0<i>.</i>7146<td>18<i>.</i>4957<td>24<i>.</i>014<td>0<i>.</i>664<td>35<i>.</i>401<td><td><td>
<tr><th><td><td><td><td><td><td><td><td><td><td><td><td><td><td><td><td><td><td><td><td><td><td><td><td><td>
</tbody>
</table>
    <!-- A1 selection -->
    <div class="absolute left-[36px] top-[22px] w-[89px] h-[26px] border-2 border-[#217346]"></div>
    <div class="absolute left-[121px] top-[45px] w-[6px] h-[6px] bg-[#217346] border border-white"></div>
  </div>
  <!-- vertical scrollbar -->
  <div class="w-[24px] h-[751px] pl-[2px] pr-[3px] pt-[2px] flex flex-col">
    <div class="h-[19px] border border-[#ababab] flex items-center justify-center"><svg class="w-[9px] h-[5px]" viewBox="0 0 9 5"><path d="M0 5h9L4.500 0z" fill="#6e6e6e"/></svg></div>
    <div class="flex-1 bg-[#f0f0f0] flex flex-col"><div class="h-[148px] bg-white border border-[#ababab]"></div></div>
    <div class="h-[19px] border border-[#ababab] flex items-center justify-center"><svg class="w-[9px] h-[5px]" viewBox="0 0 9 5"><path d="M0 0h9L4.500 5z" fill="#6e6e6e"/></svg></div>
  </div>
</div>

<!-- sheet tabs -->
<div class="h-[29px] shrink-0 bg-[#f5f5f5] border-t border-[#ababab] flex relative">
  <div class="w-[103px] flex items-center pl-[28px] gap-[22px]">
    <svg class="w-[6px] h-[9px]" viewBox="0 0 6 9"><path d="M6 0v9L0 4.500z" fill="#c8c8c8"/></svg>
    <svg class="w-[6px] h-[9px]" viewBox="0 0 6 9"><path d="M0 0v9l6-4.500z" fill="#c8c8c8"/></svg>
  </div>
  <div class="w-[82px] h-[27px] -mt-px bg-white border-x border-[#ababab] border-b-2 border-b-[#217346] text-center text-[#217346] text-[16px] leading-[24px]">Sheet1</div>
  <svg class="w-[20px] h-[20px] ml-[33px] mt-[4px]" viewBox="0 0 20 20"><circle cx="10" cy="10" r="9" fill="none" stroke="#8c8c8c" stroke-width="1.300"/><path d="M5 10h10M10 5v10" stroke="#8c8c8c" stroke-width="2"/></svg>
  <svg class="w-[2px] h-[14px] ml-[912px] mt-[8px]" viewBox="0 0 2 14"><path d="M1 0v2M1 6v2M1 12v2" stroke="#b3b3b3" stroke-width="2"/></svg>
  <div class="ml-[16px] mt-[4px] w-[727px] h-[18px] border border-[#ababab] flex">
    <div class="w-[18px] border-r border-[#ababab] flex items-center justify-center"><svg class="w-[5px] h-[9px]" viewBox="0 0 5 9"><path d="M5 0v9L0 4.500z" fill="#6e6e6e"/></svg></div>
    <div class="w-[660px] bg-white border-r border-[#ababab]"></div>
    <div class="flex-1 bg-[#e6e6e6]"></div>
    <div class="w-[18px] bg-white border-l border-[#ababab] flex items-center justify-center"><svg class="w-[5px] h-[9px]" viewBox="0 0 5 9"><path d="M0 0v9l5-4.500z" fill="#6e6e6e"/></svg></div>
  </div>
</div>

<!-- status bar -->
<div class="h-[27px] shrink-0 bg-[#217346] flex items-center pl-[7px] text-white text-[14px]">
  <span>就绪</span>
  <div class="ml-auto w-[346px] h-[27px] flex items-center">
    <div class="w-[41px] h-[27px] bg-[#0f6137] flex items-center justify-center"><svg class="w-[14px] h-[14px]" viewBox="0 0 14 14"><path d="M.5.5h13v13H.5zM.5 5h13M.5 9.500h13M5 .5v13M9.500.5v13" fill="none" stroke="#fff"/></svg></div>
    <div class="w-[40px] flex justify-center"><svg class="w-[14px] h-[15px]" viewBox="0 0 14 15"><path d="M.5.5h13v14H.5zM3.500 4h7v7h-7zM4 6h6M4 8h6" fill="none" stroke="#fff"/></svg></div>
    <div class="w-[40px] flex justify-center"><svg class="w-[14px] h-[14px]" viewBox="0 0 14 14"><path d="M.5.5h13v13H.5z" fill="none" stroke="#fff"/><path d="M1 1h4v8H1zM7 1h4v8H7z" fill="#fff"/></svg></div>
    <div class="relative ml-[8px] w-[153px] h-[27px]">
      <div class="absolute left-0 top-[13px] w-[8px] h-[2px] bg-white"></div>
      <div class="absolute left-[13px] top-[14px] w-[125px] h-px bg-white"></div>
      <div class="absolute left-[81px] top-[7px] w-[4px] h-[15px] bg-white"></div>
      <div class="absolute left-[143px] top-[13px] w-[10px] h-[2px] bg-white"></div>
      <div class="absolute left-[147px] top-[9px] w-[2px] h-[10px] bg-white"></div>
    </div>
    <span class="ml-[10px] text-[14px] font-['Liberation_Sans']">100%</span>
  </div>
</div>

<!-- taskbar strip -->
<div class="h-[9px] shrink-0 bg-[#21343f] flex">
  <div class="ml-[188px] w-[60px] bg-[#a5682f]"></div>
  <div class="ml-[2px] w-[56px] bg-[#4c5c63]"></div>
  <div class="ml-px w-[4px] bg-[#3a4a52]"></div>
</div>

<!-- cloud upload widget -->
<div class="absolute left-[1656px] top-[35px] w-[131px] h-[32px] rounded-[5px] border border-[#5ab1fb] bg-gradient-to-b from-[#dcf0ff] to-[#c3e6ff] flex overflow-hidden">
  <div class="w-[37px] bg-[#2ba2fb] flex items-center justify-center"><svg class="w-[25px] h-[20px]" viewBox="0 0 25 20"><circle cx="12.500" cy="6.500" r="4.500" fill="none" stroke="#fff" stroke-width="3"/><circle cx="6" cy="13" r="4.500" fill="none" stroke="#fff" stroke-width="3"/><circle cx="19" cy="13" r="4.500" fill="none" stroke="#fff" stroke-width="3"/></svg></div>
  <div class="flex-1 text-center leading-[30px] text-[#69bdfc] pr-[3px]">拖拽上传</div>
</div>

<!-- dictionary popup -->
<div class="absolute left-[1484px] top-[590px] w-[302px] h-[122px] bg-white border-t-[3px] border-[#d60000] shadow-[0_2px_12px_rgba(0,0,0,0.15)] px-[17px] pt-[17px]">
  <div class="flex items-center h-[30px]">
    <span class="text-[26px] font-bold text-black leading-[30px]">987</span>
    <svg class="w-[20px] h-[20px] ml-[12px]" viewBox="0 0 20 20"><path d="M10 1.500l2.600 5.600 6 .7-4.500 4.100 1.300 6L10 15l-5.400 3 1.300-6L1.400 7.800l6-.7z" fill="none" stroke="#a6a6a6" stroke-width="1.300"/></svg>
    <span class="ml-auto text-[#a6a6a6] text-[17px] whitespace-nowrap">更多释义»</span>
  </div>
  <div class="flex items-center h-[26px] mt-[6px] text-[#666]">
    <span class="text-[16px]">英</span>
    <svg class="w-[21px] h-[16px] ml-[12px]" viewBox="0 0 21 16"><path d="M1 5h4l5-4v14l-5-4H1z" fill="none" stroke="#e0262e" stroke-width="1.200"/><path d="M13 5a4 4 0 0 1 0 6M15 3a7 7 0 0 1 0 10M18 1.500a10 10 0 0 1 0 13" fill="none" stroke="#e0262e" stroke-width="1.200"/></svg>
    <span class="text-[16px] ml-[28px]">美</span>
    <svg class="w-[21px] h-[16px] ml-[12px]" viewBox="0 0 21 16"><path d="M1 5h4l5-4v14l-5-4H1z" fill="none" stroke="#e0262e" stroke-width="1.200"/><path d="M13 5a4 4 0 0 1 0 6M15 3a7 7 0 0 1 0 10M18 1.500a10 10 0 0 1 0 13" fill="none" stroke="#e0262e" stroke-width="1.200"/></svg>
  </div>
  <div class="mt-[6px] text-[17.5px] leading-[24px] text-[#444] whitespace-nowrap">nine hundred and eighty-seven</div>
</div>

<!-- input method bar -->
<div class="absolute left-[1339px] top-[1003px] w-[190px] h-[28px] bg-white flex items-center pl-[14px] text-black font-bold text-[18px] leading-[28px]">
  <span class="w-[20px] h-[20px] border border-[#9a9a9a] bg-[#eee] text-[14px] leading-[18px] text-center">拼</span>
  <span class="ml-[8px] text-[20px]">中</span>
  <svg class="w-[17px] h-[20px] ml-[6px]" viewBox="0 0 17 20"><path d="M8 1a9 9 0 0 1 0 18H3a2.500 2.500 0 0 1 0-5h3z" fill="#000"/><path d="M9 4a7 7 0 0 1 1 11" fill="none" stroke="#fff" stroke-width="1.500"/></svg>
  <span class="ml-[8px] text-[16px] leading-[22px] whitespace-nowrap tracking-[3px]">°,</span>
  <span class="ml-[8px] text-[18px]">简</span>
  <svg class="w-[18px] h-[20px] ml-[6px]" viewBox="0 0 18 20"><circle cx="9" cy="10" r="6" fill="none" stroke="#000" stroke-width="3.500"/><path d="M9 1v3M9 16v3M1 6l3 2M14 12l3 2M1 14l3-2M14 8l3-2" stroke="#000" stroke-width="2.500"/></svg>
  <svg class="w-[6px] h-[12px] ml-[13px]" viewBox="0 0 6 12"><path d="M1 1h3v3H1z" fill="#000"/><path d="M0 7h6l-3 4z" fill="#000"/></svg>
</div>

<!-- watermark -->
<div class="absolute left-[1737px] top-[1007px] text-[17px] leading-[26px] text-white/55 font-['Liberation_Sans'] whitespace-nowrap">https://blog.csdn.net/hjfq</div>

</div>
</body>
</html>
